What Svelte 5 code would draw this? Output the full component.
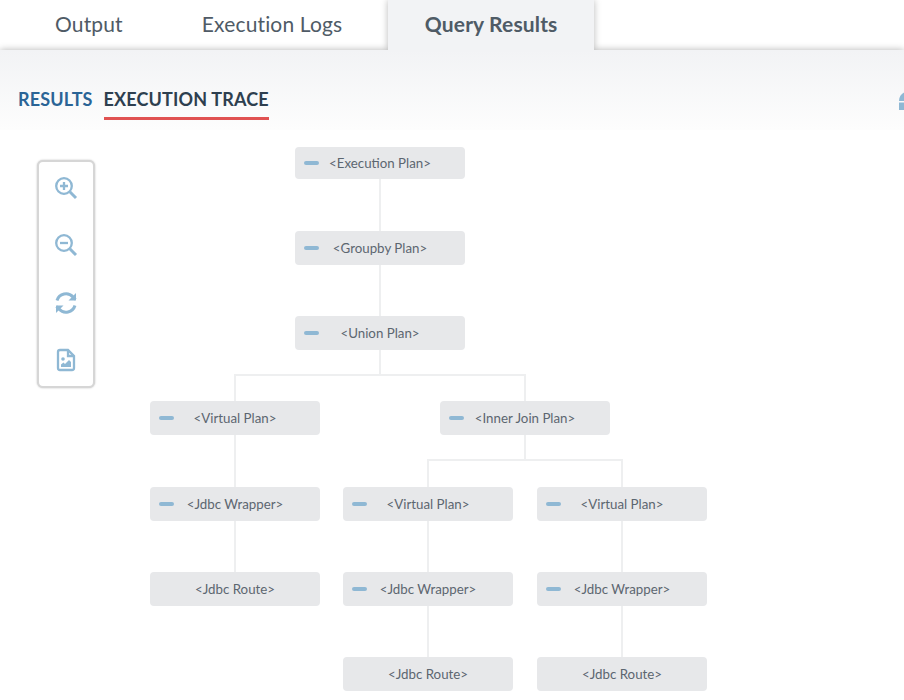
<script>
  const tabs = ['Output', 'Execution Logs', 'Query Results'];

  // canvas starts at y=130 on the page
  const rows = [17, 101, 186, 271, 357, 442, 527];
  const nodes = [
    { id: 'exec', label: '<Execution Plan>', x: 295, y: rows[0], h: 32, open: true },
    { id: 'group', parent: 'exec', label: '<Groupby Plan>', x: 295, y: rows[1], open: true },
    { id: 'union', parent: 'group', label: '<Union Plan>', x: 295, y: rows[2], open: true },
    { id: 'virt1', parent: 'union', label: '<Virtual Plan>', x: 150, y: rows[3], open: true },
    { id: 'join', parent: 'union', label: '<Inner Join Plan>', x: 440, y: rows[3], open: true },
    { id: 'wrap1', parent: 'virt1', label: '<Jdbc Wrapper>', x: 150, y: rows[4], open: true },
    { id: 'route1', parent: 'wrap1', label: '<Jdbc Route>', x: 150, y: rows[5] },
    { id: 'virt2', parent: 'join', label: '<Virtual Plan>', x: 343, y: rows[4], open: true },
    { id: 'virt3', parent: 'join', label: '<Virtual Plan>', x: 537, y: rows[4], open: true },
    { id: 'wrap2', parent: 'virt2', label: '<Jdbc Wrapper>', x: 343, y: rows[5], open: true },
    { id: 'wrap3', parent: 'virt3', label: '<Jdbc Wrapper>', x: 537, y: rows[5], open: true },
    { id: 'route2', parent: 'wrap2', label: '<Jdbc Route>', x: 343, y: rows[6] },
    { id: 'route3', parent: 'wrap3', label: '<Jdbc Route>', x: 537, y: rows[6] }
  ];

  const NODE_W = 170;
  const NODE_H = 34;

  function edgePath(node) {
    const parent = nodes.find((n) => n.id === node.parent);
    const px = parent.x + NODE_W / 2;
    const cx = node.x + NODE_W / 2;
    const bottom = parent.y + (parent.h || NODE_H);
    if (px === cx) return `M${px} ${bottom}V${node.y}`;
    const mid = bottom + 25;
    return `M${px} ${bottom}V${mid}H${cx}V${node.y}`;
  }
</script>

<div class="page">
  <nav class="tabs">
    {#each tabs as tab, i}
      <div class="tab" class:active={i === 2}>{tab}</div>
    {/each}
  </nav>

  <div class="subtabs">
    <span class="subtab">RESULTS</span>
    <span class="subtab current">EXECUTION TRACE</span>
    <svg class="corner" width="5" height="18" viewBox="0 0 5 18">
      <path d="M0 9 C0 5 2 2 5 0.5 V9 Z" fill="#8fb8d4" />
      <path d="M0 10.5 H5 V18 H0 Z" fill="#8fb8d4" />
    </svg>
  </div>

  <div class="canvas">
    <svg class="edges" width="904" height="570">
      {#each nodes.filter((n) => n.parent) as node}
        <path d={edgePath(node)} />
      {/each}
    </svg>

    {#each nodes as node}
      <div
        class="node"
        style="left:{node.x}px;top:{node.y}px;height:{node.h || NODE_H}px"
      >
        {#if node.open}<span class="minus"></span>{/if}
        {node.label}
      </div>
    {/each}

    <div class="tools">
      <svg viewBox="0 0 24 24" width="24" height="24">
        <circle cx="10" cy="10" r="7.8" />
        <path d="M15.8 15.8 L22 22" class="thick" />
        <path d="M10 6v8M6 10h8" />
      </svg>
      <svg viewBox="0 0 24 24" width="24" height="24">
        <circle cx="10" cy="10" r="7.8" />
        <path d="M15.8 15.8 L22 22" class="thick" />
        <path d="M6 10h8" />
      </svg>
      <svg viewBox="0 0 24 24" width="24" height="24">
        <path d="M3 9.5 A9.4 9.4 0 0 1 19 6 L21.5 8.5" class="thick" />
        <path d="M22 2 V9.5 H14.5 Z" class="solid" />
        <path d="M21 14.5 A9.4 9.4 0 0 1 5 18 L2.5 15.5" class="thick" />
        <path d="M2 22 V14.5 H9.5 Z" class="solid" />
      </svg>
      <svg viewBox="0 0 24 24" width="24" height="24">
        <path d="M14 2 H6 A2 2 0 0 0 4 4 V20 A2 2 0 0 0 6 22 H18 A2 2 0 0 0 20 20 V8 Z" />
        <path d="M14 2 V8 H20" />
        <circle cx="9" cy="11" r="1.8" class="solid" />
        <path d="M7 19 V16.5 L9.5 14.5 L11 16 L15 12 L17 14 V19 Z" class="solid" />
      </svg>
    </div>
  </div>
</div>

<style>
  :global(body) {
    margin: 0;
    background: #fff;
  }

  .page {
    width: 904px;
    height: 700px;
    overflow: hidden;
    font-family: Lato, "Open Sans", sans-serif;
  }

  .tabs {
    display: flex;
    height: 50px;
    padding-left: 15.5px;
  }

  .tab {
    padding: 0 39.5px;
    font-size: 21px;
    letter-spacing: 0.15px;
    line-height: 48px;
    color: #4f5b66;
  }

  .tab.active {
    margin-left: 6.5px;
    padding: 0 37px 0 36.5px;
    position: relative;
    z-index: 1;
    font-weight: 700;
    background: #f2f3f5;
    box-shadow: 0 0 7px rgba(0, 0, 0, 0.28);
    clip-path: inset(0 -9px 0 -9px);
  }

  .subtabs {
    display: flex;
    align-items: flex-start;
    gap: 11px;
    height: 80px;
    box-sizing: border-box;
    padding: 39px 0 0 18px;
    position: relative;
    background: linear-gradient(#f2f3f5, #fdfdfd);
    box-shadow: 0 0 7px rgba(0, 0, 0, 0.3);
    clip-path: inset(-9px 0 0 0);
  }

  .subtab {
    font-size: 18px;
    font-weight: 700;
    letter-spacing: 0.15px;
    line-height: 20px;
    color: #2a6496;
  }

  .subtab.current {
    padding-bottom: 8px;
    color: #2e3f4f;
    border-bottom: 3px solid #e05252;
  }

  .corner {
    position: absolute;
    right: 0;
    top: 42px;
  }

  .canvas {
    position: relative;
    height: 570px;
  }

  .edges {
    position: absolute;
    left: 0;
    top: 0;
  }

  .edges path {
    fill: none;
    stroke: #eeeff0;
    stroke-width: 2;
  }

  .node {
    position: absolute;
    width: 170px;
    display: flex;
    align-items: center;
    justify-content: center;
    box-sizing: border-box;
    padding-bottom: 1px;
    border-radius: 4px;
    background: #e7e8ea;
    font-size: 13.3px;
    color: #5c6670;
  }

  .minus {
    position: absolute;
    left: 9px;
    top: 50%;
    width: 14.5px;
    height: 4px;
    margin-top: -2.5px;
    border-radius: 2px;
    background: #8fb8d4;
  }

  .tools {
    position: absolute;
    left: 37px;
    top: 30px;
    width: 54px;
    height: 224px;
    display: flex;
    flex-direction: column;
    align-items: center;
    justify-content: space-between;
    border: 2px solid #d6d6d6;
    border-radius: 6px;
    background: #fff;
    box-shadow: 0 0 2px rgba(0, 0, 0, 0.25);
  }

  .tools svg {
    margin: 14px 0;
    fill: none;
    stroke: #8fb8d4;
    stroke-width: 2.3;
  }

  .tools .thick {
    stroke-width: 3;
  }

  .tools .solid {
    fill: #8fb8d4;
    stroke: none;
  }
</style>
